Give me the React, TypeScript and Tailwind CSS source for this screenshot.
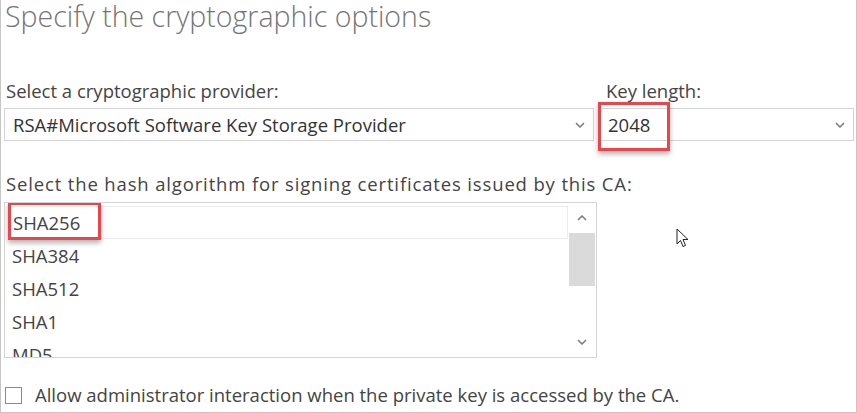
import React from "react";

const font = { fontFamily: '"Open Sans", "Noto Sans", sans-serif' };

const Chevron = ({ up = false }: { up?: boolean }) => (
  <svg width="10" height="6" viewBox="0 0 10 6" className={up ? "rotate-180" : ""}>
    <path d="M1 1 L5 5 L9 1" fill="none" stroke="#7a7a7a" strokeWidth="1.5" />
  </svg>
);

const Cursor = () => (
  <svg width="14" height="20" viewBox="0 0 14 20">
    <path d="M1 1 L1 16 L4.5 12.5 L7 18.5 L9.5 17.5 L7 11.5 L12 11.5 Z" fill="#fff" stroke="#222" strokeWidth="1" strokeLinejoin="round" />
  </svg>
);

const algorithms = ["SHA256", "SHA384", "SHA512", "SHA1", "MD5"];

export default function App() {
  return (
    <div className="w-[857px] h-[413px] bg-white overflow-hidden" style={font}>
      <div className="relative w-full h-full border-l border-r border-b border-[#c6c6c6] pl-[3px] pr-[2px]">
        <h1 className="text-[28.5px] font-light text-[#757575] leading-[32px] pl-[1px]">
          Specify the cryptographic options
        </h1>

        <div className="flex gap-[5px] mt-[48px]">
          <div className="w-[590px]">
            <label className="block text-[18.5px] text-[#444] leading-[22px] pl-[2px]">
              Select a cryptographic provider:
            </label>
            <div className="mt-[6px] h-[33px] border border-[#d4d4d4] flex items-center justify-between px-[8px]">
              <span className="text-[18.5px] text-[#333]">RSA#Microsoft Software Key Storage Provider</span>
              <Chevron />
            </div>
          </div>
          <div className="flex-1">
            <label className="block text-[18.5px] text-[#444] leading-[22px] pl-[7px]">Key length:</label>
            <div className="mt-[6px] h-[33px] border border-[#d4d4d4] flex items-center justify-between pl-[8px] pr-[8px] relative">
              <span className="text-[18.5px] text-[#333]">2048</span>
              <Chevron />
              <div className="absolute -left-[2px] -top-[7px] w-[72px] h-[49px] border-[3px] border-[#e8464b] shadow-[0_3px_5px_rgba(0,0,0,0.3)]" />
            </div>
          </div>
        </div>

        <label className="block mt-[32px] text-[18.5px] tracking-[0.85px] text-[#444] leading-[22px] pl-[2px]">
          Select the hash algorithm for signing certificates issued by this CA:
        </label>
        <div className="mt-[7px] w-[593px] h-[156px] border border-[#d4d4d4] flex overflow-hidden">
          <div className="flex-1 pt-[3px] pl-[4px]">
            {algorithms.map((a, i) => (
              <div
                key={a}
                className={`relative h-[33px] flex items-center pl-[3px] text-[18.5px] text-[#444] ${i === 0 ? "border border-[#ececec]" : ""}`}
              >
                {a}
                {i === 0 && (
                  <div className="absolute -left-[2px] -top-[5px] w-[93px] h-[38px] border-[3px] border-[#e8464b] shadow-[0_3px_5px_rgba(0,0,0,0.3)]" />
                )}
              </div>
            ))}
          </div>
          <div className="w-[28px] flex flex-col items-center">
            <div className="h-[30px] flex items-center justify-center"><Chevron up /></div>
            <div className="w-[26px] h-[53px] bg-[#dadada]" />
            <div className="flex-1" />
            <div className="h-[30px] flex items-center justify-center"><Chevron /></div>
          </div>
        </div>

        <div className="mt-[26px] flex items-center gap-[13px] pl-[1px]">
          <div className="w-[17px] h-[17px] border border-[#8a8a8a] bg-white" />
          <span className="text-[18.5px] text-[#444] leading-[22px]">
            Allow administrator interaction when the private key is accessed by the CA.
          </span>
        </div>

        <div className="absolute left-[675px] top-[228px]">
          <Cursor />
        </div>
      </div>
    </div>
  );
}
